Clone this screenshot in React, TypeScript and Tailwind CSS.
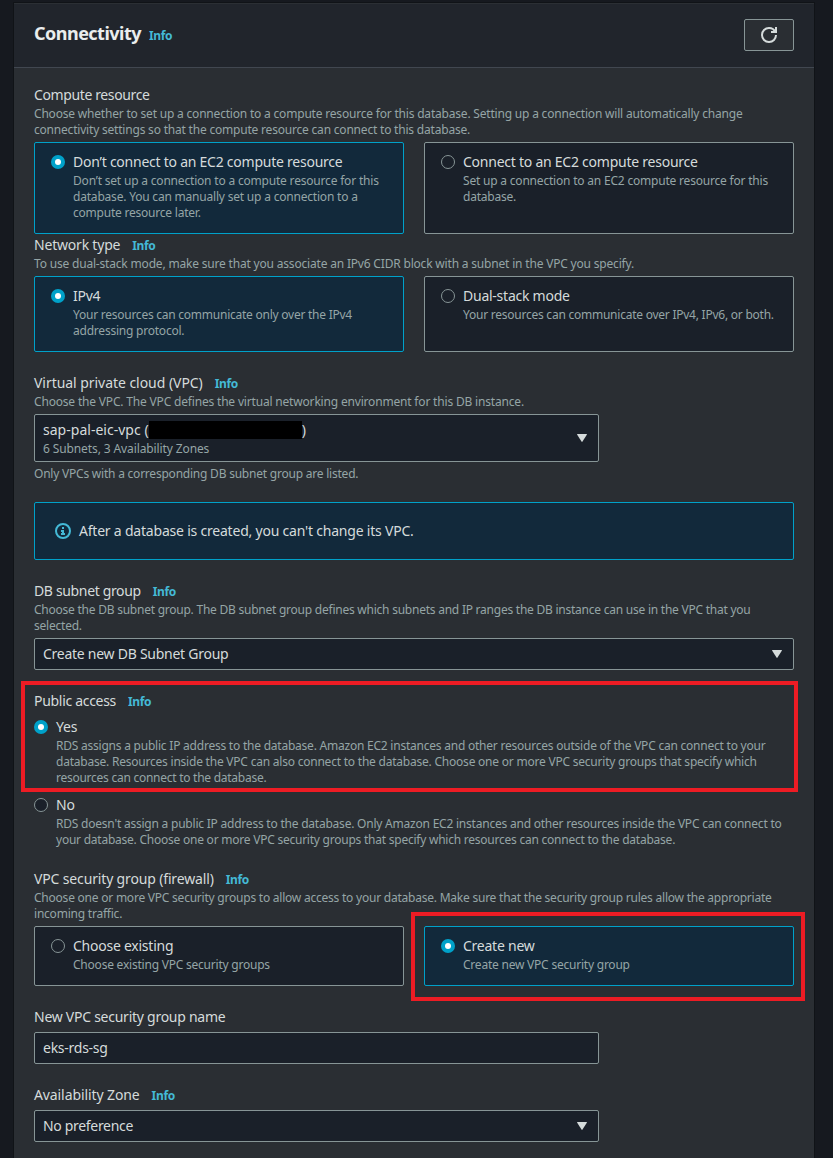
import type { ReactNode } from "react";
import clsx from "clsx";

function Info() {
  return <a className="ml-3 pt-[2px] text-[12px] font-bold tracking-[-0.35px] text-[#44b9d6]">Info</a>;
}

function Label({ children, info, className }: { children: ReactNode; info?: boolean; className?: string }) {
  return (
    <div className="flex h-[22px] items-center whitespace-nowrap text-[14px] leading-[22px] text-[#d5dbdb]">
      <span className={className ?? "tracking-[-0.26px]"}>{children}</span>
      {info && <Info />}
    </div>
  );
}

type LineSpec = string | [string, string];

function Lines({ lines }: { lines: LineSpec[] }) {
  return (
    <div className="text-[12px] leading-4 text-[#95a5a6]">
      {lines.map((line) => {
        const [text, tracking] = typeof line === "string" ? [line, "tracking-[-0.22px]"] : line;
        return (
          <p key={text} className={clsx("whitespace-nowrap", tracking)}>
            {text}
          </p>
        );
      })}
    </div>
  );
}

function Radio({ checked }: { checked?: boolean }) {
  return (
    <span
      className={clsx(
        "mt-1 flex size-[14px] shrink-0 items-center justify-center rounded-full",
        checked ? "bg-[#00a1c9]" : "border border-[#879596] bg-[#1a2029]",
      )}
    >
      {checked && <span className="size-[6px] rounded-full bg-white" />}
    </span>
  );
}

function Option({ checked, title, lines }: { checked?: boolean; title: string; lines: LineSpec[] }) {
  return (
    <div className="flex gap-2">
      <Radio checked={checked} />
      <div>
        <Label className="tracking-[-0.245px]">{title}</Label>
        <Lines lines={lines} />
      </div>
    </div>
  );
}

function Tile(props: { checked?: boolean; title: string; lines: LineSpec[] }) {
  return (
    <div
      className={clsx(
        "rounded-[2px] border px-4 pt-2 pb-3",
        props.checked ? "border-[#00a1c9] bg-[#12293b]" : "border-[#879596] bg-[#1a2029]",
      )}
    >
      <Option {...props} />
    </div>
  );
}

function Tiles({ children }: { children: ReactNode }) {
  return <div className="mt-1 grid grid-cols-2 gap-5">{children}</div>;
}

function Field({ children, caret, className }: { children: ReactNode; caret?: boolean; className?: string }) {
  return (
    <div
      className={clsx(
        "mt-1 flex items-center justify-between rounded-[2px] border border-[#879596] bg-[#1a2029] pr-[11px] pl-2 text-[#d5dbdb]",
        className,
      )}
    >
      <div>{children}</div>
      {caret && (
        <svg width="10" height="8" viewBox="0 0 10 8" className="fill-[#d5dbdb]">
          <path d="M0.5 0h9q.7 0 .3.8L5.5 7.6q-.5.6-1 0L.2.8Q-.2 0 .5 0z" />
        </svg>
      )}
    </div>
  );
}

export default function App() {
  return (
    <div className="h-[1158px] overflow-hidden bg-[#16191f] px-[14px] pt-[3px] font-['Noto_Sans',sans-serif]">
      <main className="h-[1160px] w-[800px] bg-[#2a2e33] shadow-[0_0_0_1px_#101317]">
        <header className="flex h-[65px] items-start justify-between border-t border-b border-t-[#2b2f34] border-b-[#414750] bg-[#21252c] px-5 pt-[15px]">
          <h2 className="flex h-7 items-center text-[18px] font-bold text-[#eaeded]">
            <span className="tracking-[-0.52px]">Connectivity</span>
            <a className="ml-2 pt-[5px] text-[12px] tracking-[-0.35px] text-[#44b9d6]">Info</a>
          </h2>
          <button className="flex h-8 w-[50px] items-center justify-center rounded-[2px] border border-[#879596] bg-[#2a2e33]">
            <svg width="16" height="16" viewBox="0 0 16 16" fill="none" stroke="#d5dbdb" strokeWidth="2">
              <path d="M10 5h5V0" />
              <path d="M15 8a6.957 6.957 0 0 1-7 7 6.957 6.957 0 0 1-7-7 6.957 6.957 0 0 1 7-7 6.87 6.87 0 0 1 6.3 4" />
            </svg>
          </button>
        </header>

        <div className="flex flex-col gap-5 px-5 pt-4">
          <div>
            <section>
              <Label className="tracking-[-0.38px]">Compute resource</Label>
              <Lines
                lines={[
                  ["Choose whether to set up a connection to a compute resource for this database. Setting up a connection will automatically change", "tracking-[-0.196px]"],
                  ["connectivity settings so that the compute resource can connect to this database.", "tracking-[-0.2px]"],
                ]}
              />
              <Tiles>
                <Tile
                  checked
                  title="Don’t connect to an EC2 compute resource"
                  lines={[
                    ["Don’t set up a connection to a compute resource for this", "tracking-[-0.19px]"],
                    ["database. You can manually set up a connection to a", "tracking-[-0.2px]"],
                    "compute resource later.",
                  ]}
                />
                <Tile
                  title="Connect to an EC2 compute resource"
                  lines={[["Set up a connection to an EC2 compute resource for this", "tracking-[-0.2px]"], "database."]}
                />
              </Tiles>
            </section>

            <section>
              <Label info className="tracking-[-0.2px]">Network type</Label>
              <Lines
                lines={[
                  ["To use dual-stack mode, make sure that you associate an IPv6 CIDR block with a subnet in the VPC you specify.", "tracking-[-0.185px]"],
                ]}
              />
              <Tiles>
                <Tile
                  checked
                  title="IPv4"
                  lines={[["Your resources can communicate only over the IPv4", "tracking-[-0.245px]"], "addressing protocol."]}
                />
                <Tile
                  title="Dual-stack mode"
                  lines={[["Your resources can communicate over IPv4, IPv6, or both.", "tracking-[-0.24px]"]]}
                />
              </Tiles>
            </section>
          </div>

          <section>
            <Label info className="tracking-[-0.045px]">Virtual private cloud (VPC)</Label>
            <Lines
              lines={[["Choose the VPC. The VPC defines the virtual networking environment for this DB instance.", "tracking-[-0.18px]"]]}
            />
            <Field caret className="h-12 w-[565px]">
              <div className="flex h-[22px] items-center pb-px text-[14px] tracking-[0.02px]">
                sap-pal-eic-vpc (<span className="h-[18px] w-[153px] bg-black" />)
              </div>
              <Lines lines={[["6 Subnets, 3 Availability Zones", "tracking-[-0.11px]"]]} />
            </Field>
            <div className="mt-1">
              <Lines lines={["Only VPCs with a corresponding DB subnet group are listed."]} />
            </div>
          </section>

          <div className="flex h-[58px] items-center gap-2 rounded-[2px] border border-[#00a1c9] bg-[#12293b] px-5 text-[14px] text-[#d5dbdb]">
            <svg width="16" height="16" viewBox="0 0 16 16" fill="none" stroke="#44b9d6" strokeWidth="2">
              <circle cx="8" cy="8" r="7" />
              <path d="M8 11V8H6" />
              <path d="M10 11H6" />
              <path d="M8 6V4" />
            </svg>
            <span className="pb-px tracking-[-0.21px]">After a database is created, you can't change its VPC.</span>
          </div>

          <section>
            <Label info className="tracking-[-0.35px]">DB subnet group</Label>
            <Lines
              lines={[
                ["Choose the DB subnet group. The DB subnet group defines which subnets and IP ranges the DB instance can use in the VPC that you", "tracking-[-0.238px]"],
                "selected.",
              ]}
            />
            <Field caret className="h-8">
              <Label>Create new DB Subnet Group</Label>
            </Field>
          </section>

          <section className="relative">
            <Label info className="tracking-[-0.3px]">Public access</Label>
            <div className="mt-1 flex flex-col gap-2">
              <Option
                checked
                title="Yes"
                lines={[
                  ["RDS assigns a public IP address to the database. Amazon EC2 instances and other resources outside of the VPC can connect to your", "tracking-[-0.225px]"],
                  "database. Resources inside the VPC can also connect to the database. Choose one or more VPC security groups that specify which",
                  ["resources can connect to the database.", "tracking-[-0.26px]"],
                ]}
              />
              <Option
                title="No"
                lines={[
                  "RDS doesn't assign a public IP address to the database. Only Amazon EC2 instances and other resources inside the VPC can connect to",
                  ["your database. Choose one or more VPC security groups that specify which resources can connect to the database.", "tracking-[-0.235px]"],
                ]}
              />
            </div>
            <div className="absolute -top-[9px] -left-[13px] h-[111px] w-[777px] border-4 border-[#ed1c24]" />
          </section>

          <section>
            <Label info className="tracking-[-0.15px]">VPC security group (firewall)</Label>
            <Lines
              lines={[
                ["Choose one or more VPC security groups to allow access to your database. Make sure that the security group rules allow the appropriate", "tracking-[-0.227px]"],
                "incoming traffic.",
              ]}
            />
            <Tiles>
              <Tile title="Choose existing" lines={["Choose existing VPC security groups"]} />
              <div className="relative">
                <Tile checked title="Create new" lines={["Create new VPC security group"]} />
                <div className="absolute -top-[14px] -left-[13px] h-[89px] w-[394px] border-4 border-[#ed1c24]" />
              </div>
            </Tiles>
          </section>

          <section>
            <Label>New VPC security group name</Label>
            <Field className="h-8 w-[565px]">
              <Label>eks-rds-sg</Label>
            </Field>
          </section>

          <section>
            <Label info className="tracking-[-0.1px]">Availability Zone</Label>
            <Field caret className="h-8 w-[565px]">
              <Label className="tracking-[-0.32px]">No preference</Label>
            </Field>
          </section>
        </div>
      </main>
    </div>
  );
}
